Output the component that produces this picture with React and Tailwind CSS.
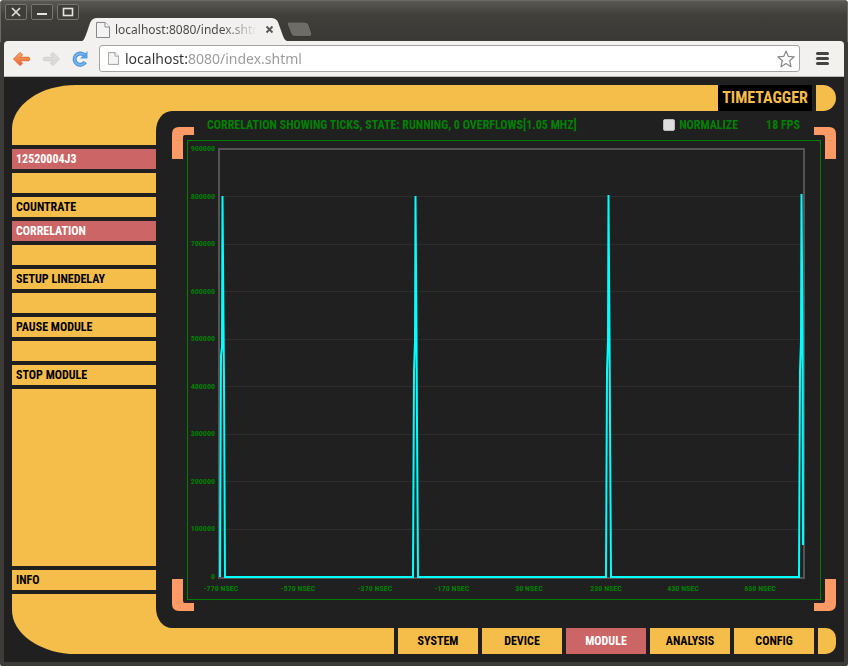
import React from 'react';

const SIDEBAR = [
  { label: '12520004J3', active: true },
  { label: '' },
  { label: 'COUNTRATE' },
  { label: 'CORRELATION', active: true },
  { label: '' },
  { label: 'SETUP LINEDELAY' },
  { label: '' },
  { label: 'PAUSE MODULE' },
  { label: '' },
  { label: 'STOP MODULE' },
];

const TABS = ['SYSTEM', 'DEVICE', 'MODULE', 'ANALYSIS', 'CONFIG'];

const Y_LABELS = [900000, 800000, 700000, 600000, 500000, 400000, 300000, 200000, 100000, 0];
const X_LABELS = [-770, -570, -370, -170, 30, 230, 430, 630];

const TRACE =
  'M32 436 L33 215 L34 205 L34.5 55 L35.5 180 L36 240 L37 436 ' +
  'H225 L226 230 L227 200 L227.5 55 L228.5 190 L229 280 L230 436 ' +
  'H418 L419 230 L420 200 L420.5 54 L421.5 190 L422 280 L423 436 ' +
  'H611 L612 230 L613 200 L613.5 53 L614.5 190 L615 404';

function WindowButton({ label, children }) {
  return (
    <button
      type="button"
      aria-label={label}
      className="flex h-4 w-[22px] items-center justify-center rounded-xs border border-[#77766f] bg-[#3f3e39]"
    >
      <svg width="14" height="12" viewBox="0 0 14 12" fill="none" stroke="#e6e4df" strokeWidth="1.6">
        {children}
      </svg>
    </button>
  );
}

function TitleBar() {
  return (
    <div className="flex h-[41px] items-start bg-linear-to-b from-[#595852] via-[#403f3a] via-35% to-[#3a3935]">
      <div className="flex gap-1 pt-[3px] pl-1">
        <WindowButton label="Close">
          <path d="M3 2l8 8M11 2l-8 8" />
        </WindowButton>
        <WindowButton label="Minimize">
          <path d="M2 8h10" strokeWidth="2" />
        </WindowButton>
        <WindowButton label="Maximize">
          <rect x="2.500" y="2.500" width="9" height="7" />
        </WindowButton>
      </div>
      <div className="relative mt-4 h-[25px] w-[212px]">
        <svg className="absolute inset-0" width="212" height="25" viewBox="0 0 212 25">
          <path d="M0 25C5 25 6 20 8 15L11 6Q13 1 18 1H192Q197 1 199 5L204 19Q206 25 212 25Z" fill="#f2f1f0" />
        </svg>
        <div className="relative flex h-full items-center pl-[17px]">
          <PageIcon width={14} height={16} />
          <span className="ml-[5px] w-[142px] overflow-hidden bg-linear-to-r from-[#444] from-75% to-[#f2f1f0] bg-clip-text font-['Noto_Sans',sans-serif] text-xs whitespace-nowrap text-transparent">
            localhost:8080/index.shtml
          </span>
          <button type="button" aria-label="Close tab" className="ml-2">
            <svg width="9" height="9" viewBox="0 0 9 9" stroke="#555" strokeWidth="1.8">
              <path d="M1.500 1.500l6 6M7.500 1.500l-6 6" />
            </svg>
          </button>
        </div>
      </div>
      <button type="button" aria-label="New tab" className="mt-[21px] -ml-1">
        <svg width="26" height="16" viewBox="0 0 26 16">
          <path d="M1 0H18Q21 0 22 3L25 12Q25 14.500 22 14.500H8Q5 14.500 4 12L0 2Q0 0 1 0Z" fill="#6d6c67" stroke="#35342f" />
        </svg>
      </button>
    </div>
  );
}

function PageIcon({ width, height }) {
  return (
    <svg width={width} height={height} viewBox="0 0 14 16" fill="#f4f4f4" stroke="#888" strokeWidth="1">
      <path d="M.5.500H9L13.500 5V15.500H.5Z" />
      <path d="M9 .5V5H13.500" fill="#fff" />
    </svg>
  );
}

function Toolbar() {
  return (
    <div className="mx-1 flex h-9 items-center rounded-t border-b border-[#b9bab8] bg-[#f2f1f0] pr-[15px] pl-2">
      <button type="button" aria-label="Back">
        <svg width="20" height="18" viewBox="0 0 20 18">
          <defs>
            <linearGradient id="back" x1="0" y1="0" x2="0" y2="1">
              <stop offset="0" stopColor="#f9b06a" />
              <stop offset="1" stopColor="#e8602c" />
            </linearGradient>
          </defs>
          <path d="M8 2.500L1.500 9 8 15.500l2.500-2.200-2.400-2.600H17q1.800-1.700 0-3.400H8.100l2.400-2.600Z" fill="url(#back)" stroke="#dd6a35" strokeLinejoin="round" />
        </svg>
      </button>
      <button type="button" aria-label="Forward" className="ml-[9px]">
        <svg width="20" height="18" viewBox="0 0 20 18">
          <path d="M12 2.500L18.500 9 12 15.500l-2.500-2.200 2.400-2.600H3q-1.800-1.700 0-3.400h8.900L9.500 4.700Z" fill="#dcdbd9" stroke="#d0cfcd" strokeLinejoin="round" />
        </svg>
      </button>
      <button type="button" aria-label="Reload" className="ml-[10px]">
        <svg width="18" height="18" viewBox="0 0 18 18" fill="none">
          <path d="M13 4.800A5.700 5.700 0 1 0 14.200 12" stroke="#4a90d9" strokeWidth="4" />
          <path d="M13 4.800A5.700 5.700 0 1 0 14.200 12" stroke="#76b4ee" strokeWidth="2" />
          <path d="M16.500 1V8.500H9Z" fill="#5a9fe2" />
        </svg>
      </button>
      <div className="ml-[10px] flex h-[27px] flex-1 items-center rounded-[3px] border border-[#a5a4a2] bg-white px-2">
        <PageIcon width={11} height={15} />
        <input
          type="text"
          aria-label="Address"
          defaultValue="localhost:8080/index.shtml"
          className="ml-[6px] min-w-0 flex-1 bg-[linear-gradient(to_right,#333_64px,#999_64px)] bg-clip-text font-['Noto_Sans',sans-serif] text-sm text-transparent outline-none"
        />
        <button type="button" aria-label="Bookmark" className="-mr-1">
          <svg width="18" height="18" viewBox="0 0 18 18" fill="#fff" stroke="#888" strokeWidth="1.200" strokeLinejoin="round">
            <path d="M9 1l2.200 5.300 6 .5-4.500 3.900L14 16.700 9 13.500l-5 3.200 1.300-6L.8 6.800l6-.5Z" />
          </svg>
        </button>
      </div>
      <button type="button" aria-label="Menu" className="ml-4 flex w-[13px] flex-col gap-[2px]">
        <span className="h-[3px] rounded-xs bg-[#444]" />
        <span className="h-[3px] rounded-xs bg-[#444]" />
        <span className="h-[3px] rounded-xs bg-[#444]" />
      </button>
    </div>
  );
}

function Sidebar() {
  return (
    <nav className="flex w-36 flex-col gap-1 text-xs font-bold">
      <div className="h-[60px] rounded-tl-[64px_44px] bg-[#f5bd4a]" />
      {SIDEBAR.map((item, i) =>
        item.label ? (
          <button
            key={i}
            type="button"
            className={
              item.active
                ? 'h-5 bg-[#cc6666] px-1 text-left text-white'
                : 'h-5 bg-[#f5bd4a] px-1 text-left text-black'
            }
          >
            {item.label}
          </button>
        ) : (
          <div key={i} className="h-5 bg-[#f5bd4a]" />
        )
      )}
      <div className="flex-1 bg-[#f5bd4a]" />
      <button type="button" className="h-5 bg-[#f5bd4a] px-1 text-left text-black">
        INFO
      </button>
      <div className="h-[60px] rounded-bl-[64px_44px] bg-[#f5bd4a]" />
    </nav>
  );
}

function Bracket({ className }) {
  return (
    <svg className={className} width="22" height="32" viewBox="0 0 22 32">
      <path d="M0 32V7Q0 0 7 0H22V8H13Q11 8 11 10V32Z" fill="#ff9966" />
    </svg>
  );
}

function Chart() {
  return (
    <svg className="block h-full w-full" viewBox="0 0 632 458" preserveAspectRatio="none">
      <g stroke="#2d2d2d">
        {Y_LABELS.slice(1, 9).map((v, i) => (
          <path key={v} d={`M33 ${Math.round(55 + i * 47.5)}.5H615`} />
        ))}
      </g>
      <rect x="31" y="8" width="585" height="429" fill="none" stroke="#545454" strokeWidth="2" />
      <path d={TRACE} fill="none" stroke="#00ffff" strokeWidth="2" />
      <g fill="#008000" className="text-[8px] font-bold">
        {Y_LABELS.map((v, i) => (
          <text key={v} x="27" y={Math.round(10 + i * 47.5)} textAnchor="end">
            {v}
          </text>
        ))}
        {X_LABELS.map((v, i) => (
          <text key={v} x={33 + i * 77} y="450" textAnchor="middle">
            {v} NSEC
          </text>
        ))}
      </g>
    </svg>
  );
}

function Panel() {
  return (
    <div className="flex flex-1 flex-col bg-[#f5bd4a]">
      <main className="relative flex flex-1 flex-col rounded-l-[16px_20px] bg-[#202020] pr-[15px] pb-7 pl-[31px]">
        <Bracket className="absolute top-4 left-4" />
        <Bracket className="absolute top-4 right-0 -scale-x-100" />
        <Bracket className="absolute bottom-[17px] left-4 -scale-y-100" />
        <Bracket className="absolute right-0 bottom-[17px] -scale-100" />
        <div className="flex h-[29px] items-center pr-[21px] pb-[2px] pl-5 text-xs font-bold text-[#008000]">
          <p>CORRELATION SHOWING TICKS, STATE: RUNNING, 0 OVERFLOWS[1.05 MHZ]</p>
          <label className="ml-auto flex items-center gap-1">
            <input type="checkbox" className="size-3 appearance-none rounded-xs border border-[#bbb] bg-[#dedede]" />
            NORMALIZE
          </label>
          <p className="ml-7">18 FPS</p>
        </div>
        <div className="h-0 min-h-[300px] flex-1 border border-[#008000]">
          <Chart />
        </div>
      </main>
    </div>
  );
}

export default function App() {
  return (
    <div className="flex min-h-screen flex-col overflow-hidden rounded-t rounded-b-xs bg-[#3c3b37] font-['Roboto_Condensed','Liberation_Sans_Narrow',sans-serif]">
      <header className="border-x border-t border-[#6b6a66]">
        <TitleBar />
      </header>
      <div className="-mt-px flex flex-1 flex-col">
        <Toolbar />
        <div className="mx-1 mb-1 flex flex-1 bg-[#202020] p-2">
          <Sidebar />
          <div className="flex min-w-0 flex-1 flex-col">
            <header className="flex h-[26px] gap-1">
              <div className="flex flex-1 bg-[#f5bd4a]">
                <h1 className="ml-auto flex w-[94px] items-center justify-center bg-black text-base font-bold text-[#f5bd4a]">
                  TIMETAGGER
                </h1>
              </div>
              <div className="w-5 rounded-r-full bg-[#f5bd4a]" />
            </header>
            <Panel />
            <footer className="flex h-[26px] gap-1 text-xs font-bold">
              <div className="flex-1 bg-[#f5bd4a]" />
              {TABS.map((tab) => (
                <button
                  key={tab}
                  type="button"
                  className={tab === 'MODULE' ? 'w-20 bg-[#cc6666] text-white' : 'w-20 bg-[#f5bd4a] text-black'}
                >
                  {tab}
                </button>
              ))}
              <div className="w-[18px] rounded-r-[10px] bg-[#f5bd4a]" />
            </footer>
          </div>
        </div>
      </div>
    </div>
  );
}
